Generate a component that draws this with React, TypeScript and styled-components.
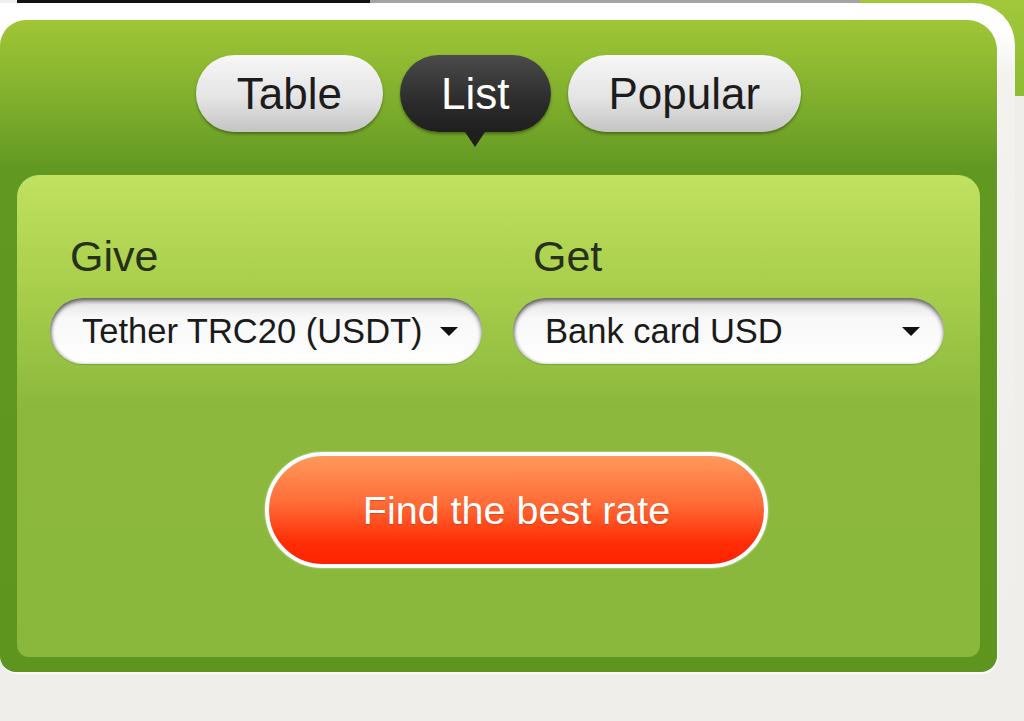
import React, { useState } from 'react';
import styled, { createGlobalStyle } from 'styled-components';

const tabs = ['Table', 'List', 'Popular'];

const App = () => {
  const [active, setActive] = useState('List');

  return (
    <Page>
      <GlobalStyle />
      <Backdrop />
      <TopStrip>
        <StripSegment $color="#111" $width={353} />
        <StripSegment $color="#a3a3a3" $width={490} />
      </TopStrip>
      <Frame>
        <Panel>
          <Tabs>
            {tabs.map((tab) => (
              <Tab key={tab} $active={tab === active} onClick={() => setActive(tab)}>
                {tab}
              </Tab>
            ))}
          </Tabs>
          <Inner>
            <Fields>
              <Field>
                <Label>Give</Label>
                <Select>
                  <SelectText>Tether TRC20 (USDT)</SelectText>
                  <Arrow />
                </Select>
              </Field>
              <Field>
                <Label>Get</Label>
                <Select>
                  <SelectText>Bank card USD</SelectText>
                  <Arrow />
                </Select>
              </Field>
            </Fields>
            <FindButton>Find the best rate</FindButton>
          </Inner>
        </Panel>
      </Frame>
    </Page>
  );
};

export default App;

// css

const GlobalStyle = createGlobalStyle`
  html, body {
    margin: 0;
    padding: 0;
    background: #efeeea;
    overflow: hidden;
  }

  body {
    font-family: 'Liberation Sans', Arial, sans-serif;
  }
`;

const Page = styled.div`
  position: relative;
  width: 1024px;
  height: 721px;
  overflow: hidden;
  background: #efeeea;
`;

const Backdrop = styled.div`
  position: absolute;
  top: 0;
  right: -40px;
  width: 204px;
  height: 96px;
  border-bottom-left-radius: 24px;
  background: linear-gradient(#a2c83a, #8dbb33);
`;

const TopStrip = styled.div`
  position: relative;
  display: flex;
  height: 3px;
  padding-left: 17px;
`;

const StripSegment = styled.div<{ $color: string; $width: number }>`
  width: ${(p) => p.$width}px;
  height: 100%;
  background: ${(p) => p.$color};
`;

const Frame = styled.div`
  position: relative;
  width: 1035px;
  margin-left: -20px;
  padding: 17px 18px 0 20px;
  box-sizing: border-box;
  border-top-right-radius: 42px;
  background: linear-gradient(#fff 0, #fff 28px, #f3f2ef 70px, #efeeea 100%);
`;

const Panel = styled.div`
  display: flex;
  flex-direction: column;
  height: 652px;
  padding: 35px 17px 15px;
  box-sizing: border-box;
  border-radius: 26px 30px 16px 16px;
  background: linear-gradient(#a0c636 0, #80af2d 80px, #619822 150px, #5e951f 100%);
  box-shadow: 1px 2px 0 #fdfdfc;
`;

const Tabs = styled.div`
  display: flex;
  justify-content: center;
  gap: 17px;
  margin-bottom: 43px;
`;

const Tab = styled.div<{ $active: boolean }>`
  position: relative;
  height: 77px;
  padding: 0 41px;
  border-radius: 39px;
  line-height: 77px;
  font-size: 44px;
  color: ${(p) => (p.$active ? '#fff' : '#1c1c1c')};
  background: ${(p) =>
    p.$active
      ? 'linear-gradient(#4b4b4b, #2c2c2c 60%, #1f1f1f)'
      : 'linear-gradient(#f7f7f7, #e4e4e4 55%, #c4c4c4)'};
  box-shadow: 0 2px 3px rgba(0, 0, 0, 0.35);
  cursor: pointer;

  &::after {
    content: '';
    display: ${(p) => (p.$active ? 'block' : 'none')};
    position: absolute;
    left: 50%;
    bottom: -15px;
    margin-left: -10px;
    border-left: 10px solid transparent;
    border-right: 10px solid transparent;
    border-top: 15px solid #1f1f1f;
  }
`;

const Inner = styled.div`
  flex: 1;
  padding: 60px 36px 0 33px;
  border-radius: 22px 22px 12px 12px;
  background: linear-gradient(#c1e161 0, #a9cf4c 110px, #8cb93d 230px, #8ab83c 100%);
`;

const Fields = styled.div`
  display: grid;
  grid-template-columns: 432px 431px;
  column-gap: 31px;
`;

const Field = styled.div`
  display: flex;
  flex-direction: column;
`;

const Label = styled.div`
  padding-left: 20px;
  margin-bottom: 20px;
  line-height: 43px;
  font-size: 43px;
  color: #27301c;
`;

const Select = styled.div`
  display: flex;
  align-items: center;
  height: 66px;
  padding: 0 24px 0 32px;
  box-sizing: border-box;
  border-radius: 33px;
  background: linear-gradient(#e2e2e2 0, #f8f8f8 30%, #fff 100%);
  box-shadow: inset 0 3px 4px rgba(0, 0, 0, 0.55), inset 2px 0 3px rgba(0, 0, 0, 0.2),
    0 1px 1px rgba(0, 0, 0, 0.15);
  cursor: pointer;
`;

const SelectText = styled.span`
  flex: 1;
  font-size: 34.5px;
  color: #1a1a1a;
  white-space: nowrap;
`;

const Arrow = styled.span`
  width: 0;
  height: 0;
  border-left: 9px solid transparent;
  border-right: 9px solid transparent;
  border-top: 9px solid #111;
`;

const FindButton = styled.button`
  display: block;
  width: 503px;
  height: 116px;
  margin: 88px 0 0 215px;
  border: 4px solid #fff;
  border-radius: 58px;
  background: linear-gradient(#ff9a5c 0, #ff6a35 45%, #ff2e06 80%, #ff2200 100%);
  box-shadow: 0 0 2px rgba(255, 255, 255, 0.8);
  color: #fff;
  font-family: inherit;
  font-size: 39.5px;
  text-shadow: 0 1px 1px rgba(150, 30, 0, 0.35);
  cursor: pointer;
`;
